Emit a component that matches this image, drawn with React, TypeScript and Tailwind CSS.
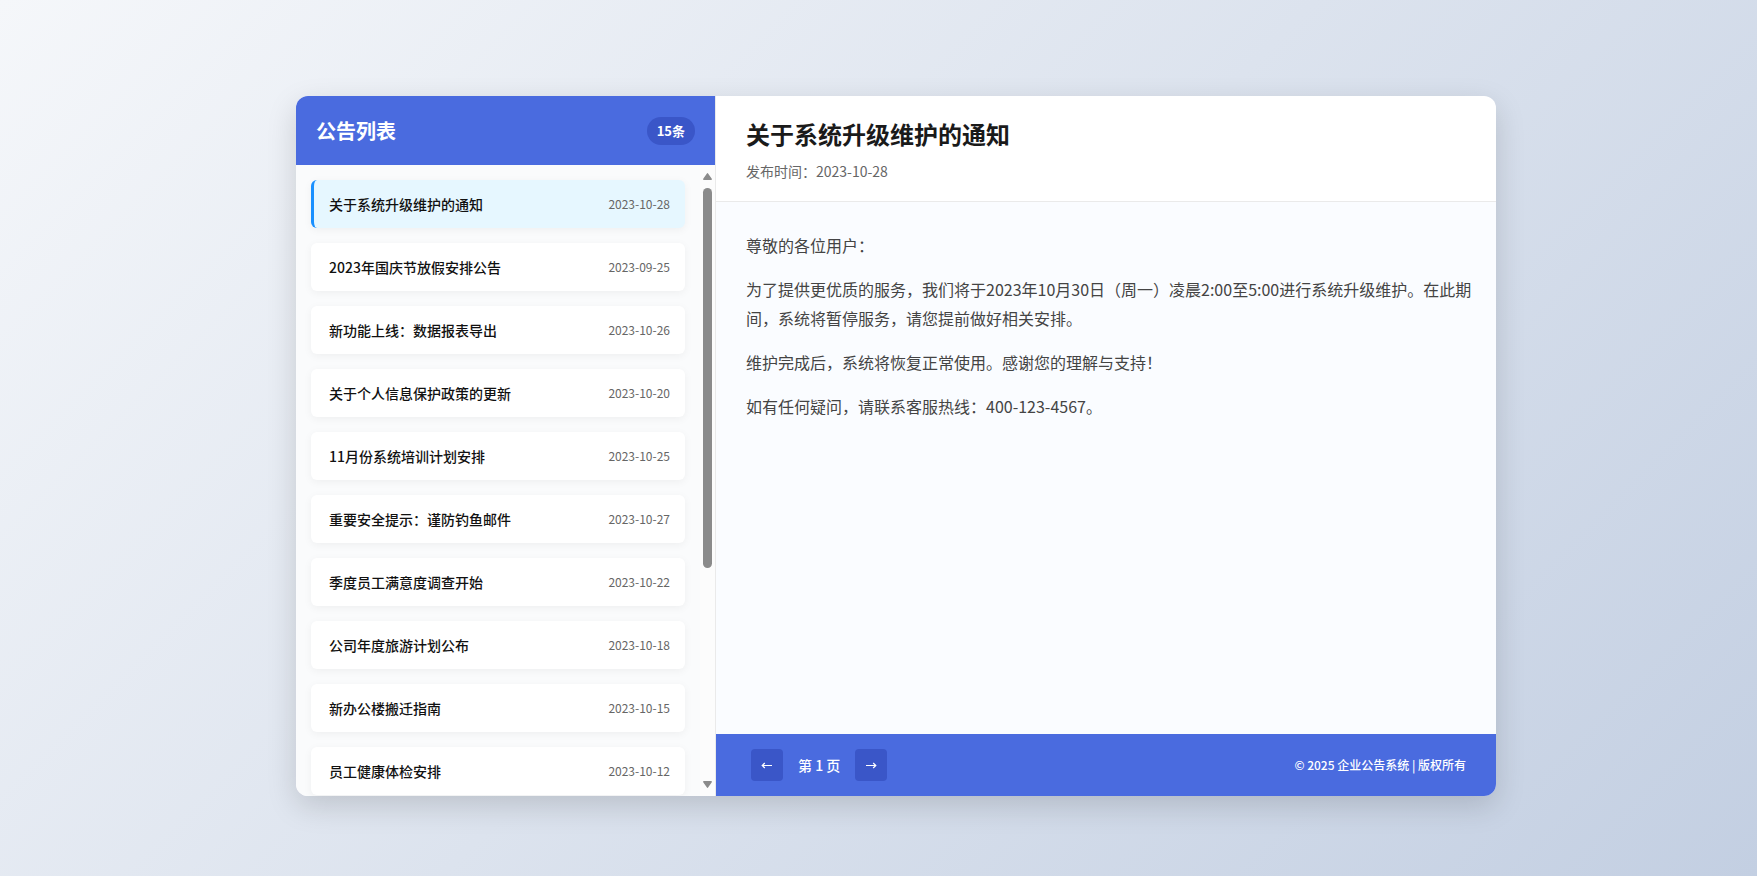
import { useState, type ReactNode } from "react";

type Notice = { title: string; date: string };

const notices: Notice[] = [
  { title: "关于系统升级维护的通知", date: "2023-10-28" },
  { title: "2023年国庆节放假安排公告", date: "2023-09-25" },
  { title: "新功能上线：数据报表导出", date: "2023-10-26" },
  { title: "关于个人信息保护政策的更新", date: "2023-10-20" },
  { title: "11月份系统培训计划安排", date: "2023-10-25" },
  { title: "重要安全提示：谨防钓鱼邮件", date: "2023-10-27" },
  { title: "季度员工满意度调查开始", date: "2023-10-22" },
  { title: "公司年度旅游计划公布", date: "2023-10-18" },
  { title: "新办公楼搬迁指南", date: "2023-10-15" },
  { title: "员工健康体检安排", date: "2023-10-12" },
];

const paragraphs = [
  "尊敬的各位用户：",
  "为了提供更优质的服务，我们将于2023年10月30日（周一）凌晨2:00至5:00进行系统升级维护。在此期间，系统将暂停服务，请您提前做好相关安排。",
  "维护完成后，系统将恢复正常使用。感谢您的理解与支持！",
  "如有任何疑问，请联系客服热线：400-123-4567。",
];

function NoticeItem({ notice, active, onSelect }: { notice: Notice; active: boolean; onSelect: () => void }) {
  return (
    <li>
      <button
        type="button"
        onClick={onSelect}
        aria-current={active}
        className={`flex h-12 w-full cursor-pointer items-center justify-between rounded-md border-l-[3px] px-[15px] text-left shadow-[0_2px_8px_rgba(0,0,0,0.05)] ${
          active ? "border-[#1890ff] bg-[#e6f7ff]" : "border-transparent bg-white"
        }`}
      >
        <span className="truncate text-sm font-medium text-[#111]">{notice.title}</span>
        <span className="shrink-0 text-xs text-[#666]">{notice.date}</span>
      </button>
    </li>
  );
}

function ScrollTrack() {
  return (
    <div aria-hidden="true" className="flex w-[15px] shrink-0 flex-col items-center gap-2 bg-[#fcfcfc] py-2">
      <svg className="h-[7px] w-[9px] shrink-0" viewBox="0 0 9 7">
        <path d="M4.5 0.8 8.2 6.2H0.8Z" fill="#8b8b8b" stroke="#8b8b8b" strokeWidth="1.4" strokeLinejoin="round" />
      </svg>
      <div className="min-h-0 w-[9px] flex-1">
        <div className="h-[65%] rounded-full bg-[#8b8b8b]" />
      </div>
      <svg className="h-[7px] w-[9px] shrink-0" viewBox="0 0 9 7">
        <path d="M4.5 6.2 0.8 0.8H8.2Z" fill="#8b8b8b" stroke="#8b8b8b" strokeWidth="1.4" strokeLinejoin="round" />
      </svg>
    </div>
  );
}

function PageButton({ label, children }: { label: string; children: ReactNode }) {
  return (
    <button
      type="button"
      aria-label={label}
      className="flex size-8 cursor-pointer items-center justify-center rounded bg-[#3a56c8] text-white"
    >
      <svg className="size-3" viewBox="0 0 12 12" fill="none" stroke="currentColor" strokeWidth="1.2">
        {children}
      </svg>
    </button>
  );
}

export default function App() {
  const [selected, setSelected] = useState(0);
  const current = notices[selected];

  return (
    <div
      lang="zh-CN"
      className="flex min-h-screen flex-col bg-[linear-gradient(135deg,#f5f7fa_0%,#c3cfe2_100%)] pt-24 pr-5 pb-20 pl-[55px] font-['Noto_Sans_CJK_SC',sans-serif]"
    >
      <main className="mx-auto flex w-full max-w-[1200px] grow basis-[0px] overflow-hidden rounded-xl bg-white shadow-[0_10px_30px_rgba(0,0,0,0.15)]">
        <aside className="flex w-[35%] shrink-0 flex-col border-r border-[#eaeaea] bg-[#fafbfc]">
          <header className="flex h-[69px] shrink-0 items-center justify-between bg-[#4a6bdf] px-5 text-white">
            <h2 className="text-xl font-bold">公告列表</h2>
            <span className="rounded-full bg-[#3a56c8] px-2.5 py-1 text-[13px] leading-5 font-bold">15条</span>
          </header>
          <div className="flex min-h-0 grow basis-[0px]">
            <ul className="flex min-w-0 flex-1 flex-col gap-[15px] overflow-y-auto p-[15px] [scrollbar-width:none]">
              {notices.map((notice, i) => (
                <NoticeItem key={notice.title} notice={notice} active={i === selected} onSelect={() => setSelected(i)} />
              ))}
            </ul>
            <ScrollTrack />
          </div>
        </aside>

        <section className="flex min-w-0 flex-1 flex-col">
          <header className="border-b border-[#eaeaea] px-[30px] pt-[19px] pb-[18px]">
            <h1 className="text-2xl leading-[38px] font-bold text-[#1a1a1a]">{current.title}</h1>
            <p className="mt-1.5 text-sm leading-6 text-[#666]">发布时间：{current.date}</p>
          </header>
          <article className="flex flex-1 flex-col gap-[15px] bg-[#fafcff] pt-[29px] pr-6 pb-[29px] pl-[30px] text-base leading-[29px] text-[#444]">
            {paragraphs.map((text) => (
              <p key={text}>{text}</p>
            ))}
          </article>
          <footer className="flex items-center justify-between bg-[#4a6bdf] py-[15px] pr-[30px] pl-[35px] text-white">
            <nav aria-label="分页" className="flex items-center gap-[15px]">
              <PageButton label="上一页">
                <path d="M11 6.5H1.2M3.8 4 1.2 6.5 3.8 9" />
              </PageButton>
              <span className="text-sm font-medium">第 1 页</span>
              <PageButton label="下一页">
                <path d="M1 6.5H10.800M8.200 4 10.800 6.500 8.200 9" />
              </PageButton>
            </nav>
            <p className="text-xs font-medium">© 2025 企业公告系统 | 版权所有</p>
          </footer>
        </section>
      </main>
    </div>
  );
}
